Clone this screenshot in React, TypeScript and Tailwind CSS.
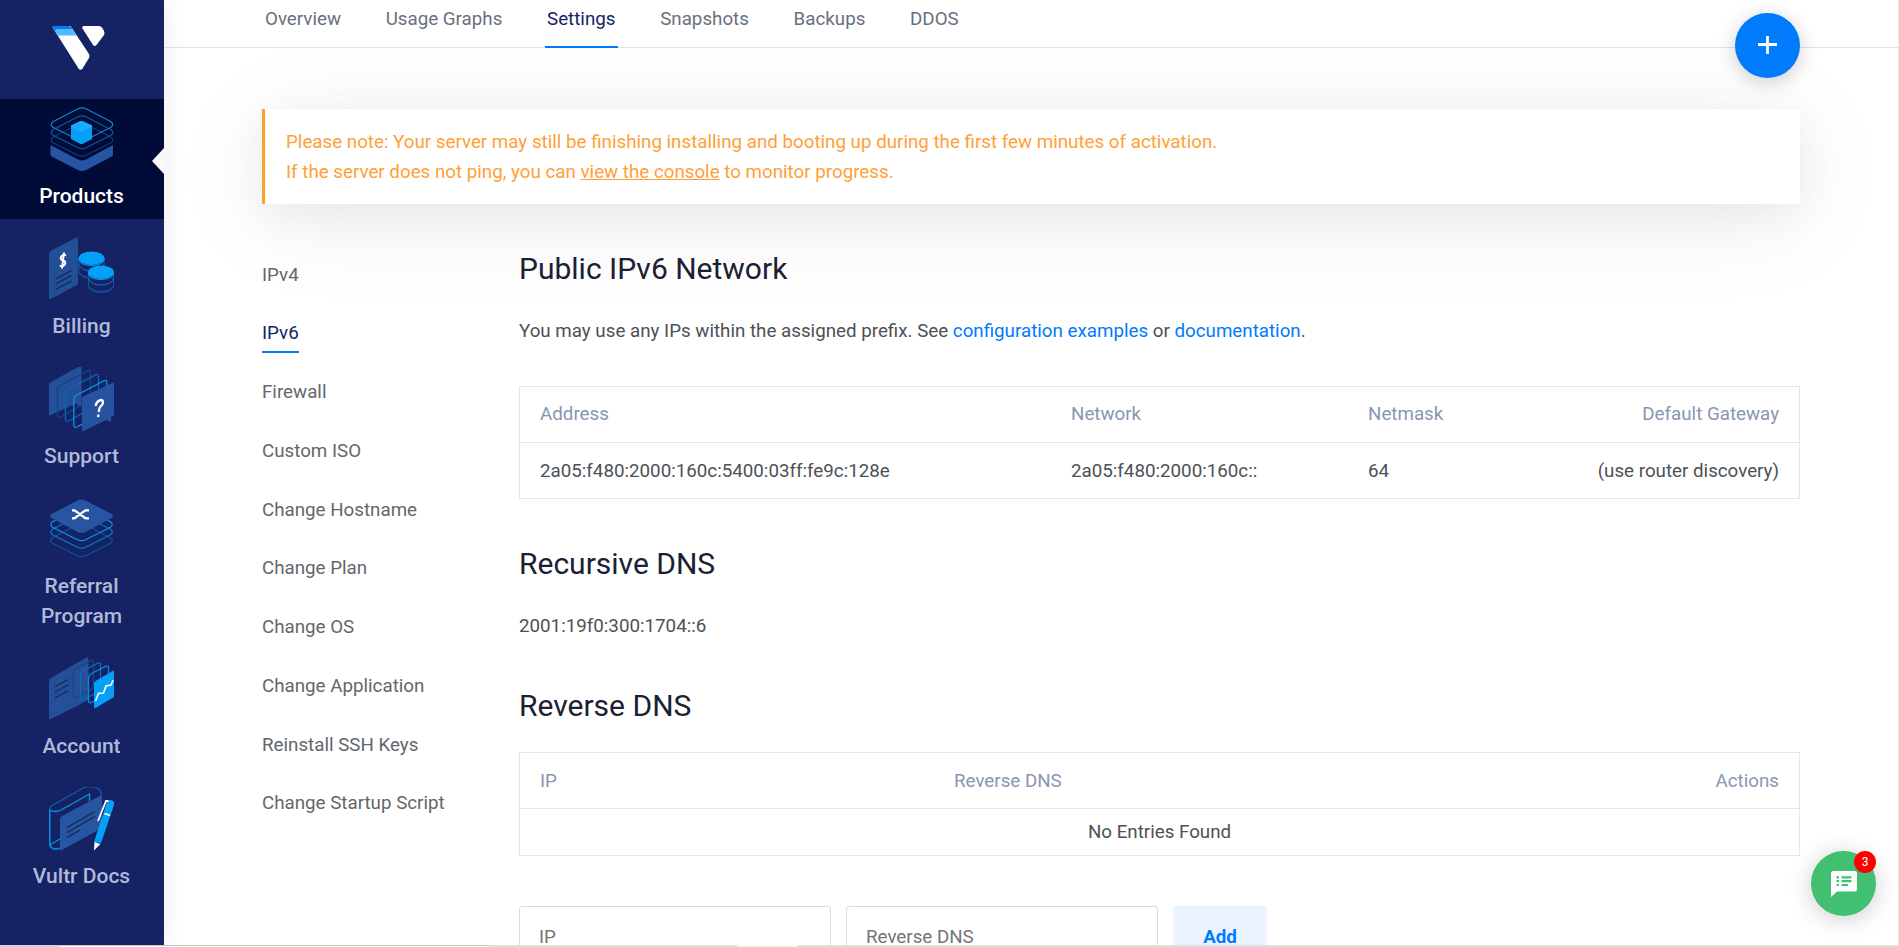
import React from 'react';

type IconProps = { children: React.ReactNode };
const Icon = ({ children }: IconProps) => (
  <svg width="66" height="66" viewBox="0 0 66 66" fill="none" className="shrink-0">{children}</svg>
);

const Layer = ({ y, stroke }: { y: number; stroke: string }) => (
  <path
    transform={`translate(0 ${y})`}
    d="M29 1.3Q33-.6 37 1.3L62 14.2Q65.5 17 62 19.8L37 32.2Q33 34 29 32.2L4 19.8Q.5 17 4 14.2Z"
    stroke={stroke}
    strokeWidth="1.2"
  />
);

const ProductsIcon = () => (
  <Icon>
    <Layer y={16} stroke="#0b3f78" />
    <Layer y={8.5} stroke="#0a5c9f" />
    <Layer y={0.5} stroke="#0b86cf" />
    <path d="M1.5 38L29 52.5Q33 54.500 37 52.5L64 38V47.500Q64 49 62 50L37 63Q33 65 29 63L3.500 50Q1.500 49 1.500 47.500Z" fill="#2855a3" />
    <path d="M22 18.500L30.500 14.500Q32.500 13.500 34.500 14.500L43 18.500V32L34.500 36.500Q32.500 37.500 30.500 36.500L22 32Z" fill="#05a0f7" />
    <path d="M22 18.500L30.500 14.500Q32.500 13.500 34.500 14.500L43 18.500V20L34.500 24Q32.500 25 30.500 24L22 20Z" fill="#16adff" />
  </Icon>
);

const Coins = ({ x, y }: { x: number; y: number }) => (
  <g transform={`translate(${x} ${y})`}>
    <path d="M0 21Q3 27 13 27Q23 27 26 21" stroke="#0f4c91" />
    <path d="M.5 8V20Q3 26 13 26Q23 26 25.500 20V8" stroke="#0f5ba4" />
    <path d="M.5 13Q3 19.500 13 19.500Q23 19.500 25.500 13" stroke="#0b78c6" />
    <path d="M.5 7V9Q3 14 13 14Q23 14 25.500 9V7" stroke="#0797ea" />
    <ellipse cx="13" cy="6.800" rx="13" ry="6.800" fill="#05a0f7" />
  </g>
);

const BillingIcon = () => (
  <Icon>
    <path d="M0 17Q0 15 1.500 14L27 .7Q29 0 29 2V45.500Q29 47.500 27.500 48.300L2 62Q0 63 0 61Z" fill="#234f97" />
    <path d="M6.500 42L22.500 33.500M6.500 47L22.500 38.500M6.500 52.500L22.500 44" stroke="#112453" strokeWidth="1.300" />
    <path d="M17 18.500Q14 16.500 12 20Q11 23 14 23.500Q17 24 16 27Q14 30.500 10.800 28.500M15 15.500L13 31.500" stroke="#fff" strokeWidth="2" />
    <Coins x={29.500} y={14.500} />
    <path d="M39 35H65V50H39Z" fill="#152364" fillOpacity=".6" />
    <Coins x={39} y={28.500} />
  </Icon>
);

const Bubble = ({ x, y, stroke }: { x: number; y: number; stroke: string }) => (
  <path transform={`translate(${x} ${y})`} d="M0 20Q0 17 3 15L30 .8Q33-.5 33 2V30L5 46Q0 49 0 45Z" stroke={stroke} strokeWidth="1.300" />
);

const SupportIcon = () => (
  <Icon>
    <g transform="translate(0 -1)">
      <path d="M0 19Q0 17 2 16L30 .6Q32.500-.7 32.500 2V41L28 39V37L2 49Q0 50 0 48Z" fill="#264f99" />
      <Bubble x={8.500} y={4} stroke="#0f4586" />
      <Bubble x={16.500} y={8} stroke="#0d67b0" />
      <Bubble x={24.800} y={14} stroke="#0594e8" />
      <path d="M33 33Q33 31 35 30L63.500 17Q65 16 65 18V49L62 51V55.500L57 54L34.500 65Q33 66 33 64Z" fill="#2653a0" />
      <path d="M46.500 40Q48 34.500 52 34Q55.500 34.500 53 39Q49.500 42 50 46M49.500 48.500L49 51" stroke="#fff" strokeWidth="2.300" />
    </g>
  </Icon>
);

const ReferralIcon = () => (
  <Icon>
    <g transform="translate(-.5 2.5)">
      <Layer y={24} stroke="#0d5297" />
      <Layer y={15.500} stroke="#087ac7" />
      <Layer y={8} stroke="#0898ed" />
      <path d="M29 1Q33-1 37 1L63 14.500Q66 16.500 63 18.500L37 32.500Q33 34.500 29 32.500L3 18.500Q0 16.500 3 14.500Z" fill="#2855a1" />
      <path d="M23.500 10.800H26L37 18.800H40.500M23.500 18.800H26L37 10.800H40.500" stroke="#fff" strokeWidth="2.300" />
    </g>
  </Icon>
);

const Sheet = ({ x, y, stroke }: { x: number; y: number; stroke: string }) => (
  <path transform={`translate(${x} ${y})`} d="M0 13Q0 10 3 8L17 .8Q20-.6 20 2V25Q20 28 17 30L3 37Q0 38 0 35Z" stroke={stroke} strokeWidth="1.300" />
);

const AccountIcon = () => (
  <Icon>
    <path d="M0 24Q0 22 2 21L37 .8Q39.500-.5 39.500 2V43L2 62Q0 63 0 61Z" fill="#264f99" />
    <path d="M6 29.500L19 22.500M6 35L19 28M6 41L19 34" stroke="#142a61" strokeWidth="1.400" />
    <Sheet x={24.500} y={3} stroke="#174685" />
    <Sheet x={31.500} y={5.500} stroke="#0c6cb7" />
    <Sheet x={39.500} y={8.500} stroke="#078bdd" />
    <path d="M45 26.500Q45 25 46.500 24L64 13.800Q65 13 65 14.500V40L46.500 51Q45 51.500 45 50Z" fill="#05a0f7" />
    <path d="M46.500 44L49.500 36.500L54.500 36L57 29L62 28L64 23" stroke="#fff" strokeWidth="1.500" />
  </Icon>
);

const DocsIcon = () => (
  <Icon>
    <g transform="translate(0 -1)">
      <path d="M.7 23V60Q4 65 12 62V60M.7 23Q1 20 5 18.500L34 2Q48-2 52 6V12" stroke="#0a62ae" strokeWidth="1.300" />
      <path d="M.7 24Q6 27 12 24L40.500 8V15M.7 24V59Q4 65 11 62M.7 59L11 53" stroke="#0594e8" strokeWidth="1.300" />
      <path d="M11 33Q11 31 13 30L51 10Q53 9 53 11V42L13 64Q11 65 11 63Z" fill="#2855a1" />
      <path d="M18 41.500L46 25.500M18 46.500L46 30.500M18 51.500L31 44" stroke="#122653" strokeWidth="1.300" />
      <path d="M57 19Q58 14 62 14Q66 15 65 19L52 57L45 56Z" fill="#05a0f7" />
      <path d="M59.500 15H57L49 35M55.500 27.500L61 29.500" stroke="#fff" strokeWidth="1.800" />
      <path d="M45.500 56L51.500 58L45 64.500Z" fill="#fff" />
    </g>
  </Icon>
);

const NAV = [
  { label: 'Products', icon: <ProductsIcon />, active: true },
  { label: 'Billing', icon: <BillingIcon /> },
  { label: 'Support', icon: <SupportIcon /> },
  { label: 'Referral Program', icon: <ReferralIcon /> },
  { label: 'Account', icon: <AccountIcon /> },
  { label: 'Vultr Docs', icon: <DocsIcon /> },
];

const TABS = ['Overview', 'Usage Graphs', 'Settings', 'Snapshots', 'Backups', 'DDOS'];

const SECTIONS = [
  'IPv4', 'IPv6', 'Firewall', 'Custom ISO', 'Change Hostname', 'Change Plan',
  'Change OS', 'Change Application', 'Reinstall SSH Keys', 'Change Startup Script',
];

const Sidebar = () => (
  <aside className="relative z-10 h-[945px] w-[164px] shrink-0 bg-[#152364] shadow-[0_0_24px_rgba(0,0,0,0.08)]">
    <div className="flex h-[99px] pt-[26px] pl-[52px]">
      <svg width="54" height="45" viewBox="0 0 54 45" className="h-[45px] w-[54px]">
        <path d="M2 0H18.500L37 28Q38 30 37 32L30.500 42.500Q28.500 45 26.500 42.500L1 2Q0 0 2 0Z" fill="#fff" />
        <path d="M3.500 3H20.500L24.500 9.500H6L3 5Q2.500 3.500 3.500 3Z" fill="#51b9ff" />
        <path d="M1.500 0H17Q18.500 0 19.500 1.500L20.500 3H5Q3.500 3 3.500 5L1 2Q0 0 1.500 0Z" fill="#007bfc" />
        <path d="M32 0H47Q49 0 50 1.500L52 5Q53 7 52 9L44.500 19Q43 21 41 19L30.500 2.500Q29.500 0 32 0Z" fill="#fff" />
      </svg>
    </div>
    <nav className="flex flex-col gap-[10px]">
      {NAV.map((n) => (
        <a
          key={n.label}
          className={
            n.active
              ? 'relative flex flex-col items-center bg-[#000b37] pt-2 pr-px pb-[8px] text-white'
              : 'relative flex flex-col items-center pt-2 pr-px pb-[8px] text-[#b1b9da]'
          }
        >
          {n.icon}
          <span className="mt-[8px] w-[120px] text-center text-[21px] leading-[30px] font-medium">{n.label}</span>
          {n.active && (
            <svg width="12" height="26" viewBox="0 0 12 26" className="absolute top-[48.5px] right-0">
              <path d="M12 0V26L0 13Z" fill="#f9f9f9" />
            </svg>
          )}
        </a>
      ))}
    </nav>
  </aside>
);

export default function App() {
  return (
    <div
      className="relative flex h-[947px] w-[1899px] flex-col overflow-hidden bg-white text-[18.75px] leading-[30px] text-[#4d5156]"
      style={{ fontFamily: 'Roboto, "Liberation Sans", sans-serif' }}
    >
      <div className="flex h-[945px] overflow-hidden">
        <Sidebar />
        <main className="min-w-0 flex-1 border-r border-[#e8e8e8]">
          <header className="flex h-[48px] gap-[39.7px] border-b border-[#e3e3e3] pl-[98.5px]">
            {TABS.map((t) => (
              <a
                key={t}
                className={
                  t === 'Settings'
                    ? 'h-[48px] border-b-2 border-[#007bfc] px-[2.5px] pt-[4px] text-[#152364]'
                    : 'h-[48px] px-[2.5px] pt-[4px] text-[#69707d]'
                }
              >
                {t}
              </a>
            ))}
          </header>
          <div className="pt-[61px] pr-[98px] pl-[98px]">
            <div className="h-[95px] border-l-[3px] border-[#ff9f2e] bg-white pt-[18px] pl-[21px] text-[#ff9f38] shadow-[0_15px_100px_rgba(0,0,0,0.08),0_10px_40px_rgba(0,0,0,0.05)]">
              <p>Please note: Your server may still be finishing installing and booting up during the first few minutes of activation.</p>
              <p>
                If the server does not ping, you can <a className="underline">view the console</a> to monitor progress.
              </p>
            </div>
            <div className="flex">
              <nav className="flex w-[257px] shrink-0 flex-col items-start gap-[23.75px] pt-[55.6px] text-[#63676c]">
                {SECTIONS.map((s) => (
                  <a
                    key={s}
                    className={
                      s === 'IPv6'
                        ? 'h-[35px] border-b-2 border-[#007bfc] text-[#152364]'
                        : 'h-[35px]'
                    }
                  >
                    {s}
                  </a>
                ))}
              </nav>
              <section className="min-w-0 flex-1">
                <h2 className="pt-[45px] text-[30px] leading-[40px] text-[#1a2133]">Public IPv6 Network</h2>
                <p className="mt-[27px]">
                  You may use any IPs within the assigned prefix. See <a className="text-[#007bfc]">configuration examples</a> or{' '}
                  <a className="text-[#007bfc]">documentation</a>.
                </p>
                <div className="mt-[40px] h-[113px] border border-[#e4e6ea] bg-white">
                  <div className="flex h-[56px] items-center border-b border-[#e4e6ea] px-5 pb-px text-[#8896b2]">
                    <span className="w-[531px]">Address</span>
                    <span className="w-[297px]">Network</span>
                    <span>Netmask</span>
                    <span className="ml-auto">Default Gateway</span>
                  </div>
                  <div className="flex h-[55px] items-center px-5">
                    <span className="w-[531px]">2a05:f480:2000:160c:5400:03ff:fe9c:128e</span>
                    <span className="w-[297px]">2a05:f480:2000:160c::</span>
                    <span>64</span>
                    <span className="ml-auto">(use router discovery)</span>
                  </div>
                </div>
                <h2 className="mt-[45px] text-[30px] leading-[40px] text-[#1a2133]">Recursive DNS</h2>
                <p className="mt-[27px]">2001:19f0:300:1704::6</p>
                <h2 className="mt-[45px] text-[30px] leading-[40px] text-[#1a2133]">Reverse DNS</h2>
                <div className="mt-[26px] h-[104px] border border-[#e4e6ea] bg-white">
                  <div className="flex h-[56px] items-center border-b border-[#e4e6ea] px-5 text-[#8896b2]">
                    <span className="w-[414px]">IP</span>
                    <span>Reverse DNS</span>
                    <span className="ml-auto">Actions</span>
                  </div>
                  <div className="flex h-[46px] items-center justify-center">No Entries Found</div>
                </div>
                <div className="mt-[50px] flex gap-[15px]">
                  <div className="h-[60px] w-[312px] rounded-[3px] border border-[#d9dbdf] pt-[15px] pl-[19px] text-[#757575]">IP</div>
                  <div className="h-[60px] w-[312px] rounded-[3px] border border-[#d9dbdf] pt-[15px] pl-[19px] text-[#757575]">Reverse DNS</div>
                  <button className="h-[60px] w-[94px] rounded-[3px] bg-[#ebf3ff] pt-[2px] font-bold text-[#007bfc]">Add</button>
                </div>
              </section>
            </div>
          </div>
        </main>
      </div>
      <div className="flex h-[2px]">
        <div className="w-[60px] bg-[#d3d4e0]" />
        <div className="w-[429px] border-t border-[#c6c6c6] bg-white" />
        <div className="w-[248px] bg-[#dedede]" />
        <div className="w-[61px] bg-[#f4f4f4]" />
        <div className="flex-1 bg-[#dedede]" />
      </div>
      <button className="absolute top-[13px] left-[1735px] flex size-[65px] items-center justify-center rounded-full bg-[#007bfc] shadow-[0_4px_20px_rgba(0,0,0,0.2)]">
        <svg width="19" height="19" viewBox="0 0 19 19"><path d="M9.500 0V18M0 8.500H19" stroke="#fff" strokeWidth="2.800" /></svg>
      </button>
      <button className="absolute top-[851px] left-[1811px] flex size-[65px] items-center justify-center rounded-full bg-[#41c072] shadow-[0_3px_24px_rgba(0,0,0,0.2)]">
        <svg width="26" height="26" viewBox="0 0 26 26">
          <path d="M2.500 0H23.500Q26 0 26 2.500V18Q26 20.500 23.500 20.500H6L0 26V2.500Q0 0 2.500 0Z" fill="#fff" />
          <path d="M5.500 6.300H8M5.500 10.200H8M5.500 14H8M10.500 6.300H20.500M10.500 10.200H20.500M10.500 14H17" stroke="#41c072" strokeWidth="2.200" />
        </svg>
        <span className="absolute top-0 right-0 flex size-[22px] items-center justify-center rounded-full bg-[#ff0000] text-[12px] leading-none text-white">3</span>
      </button>
    </div>
  );
}
